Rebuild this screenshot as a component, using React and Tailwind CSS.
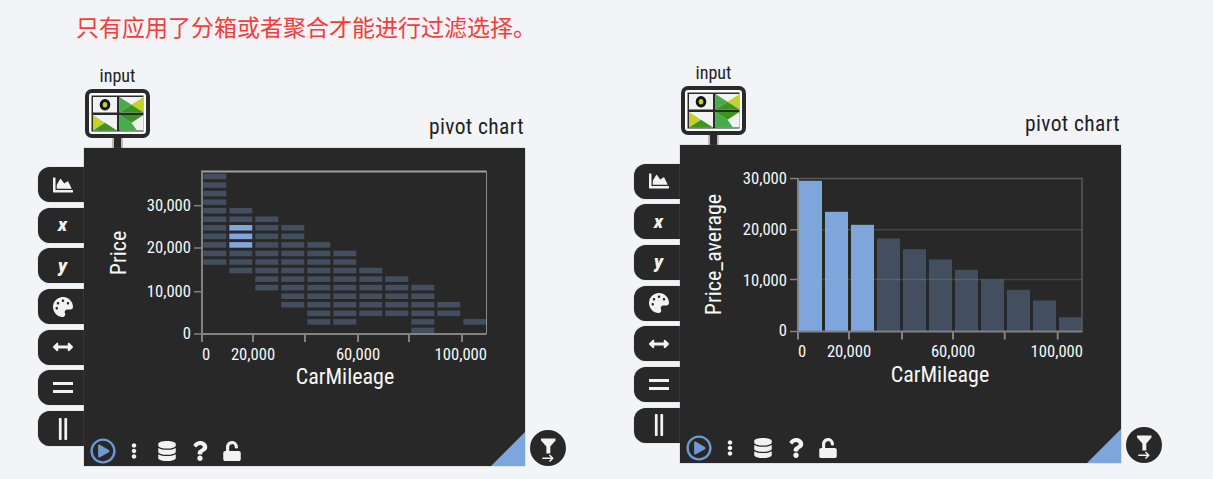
import React from 'react';
import {
  FaChartArea,
  FaPalette,
  FaArrowsAltH,
  FaGripLinesVertical,
  FaRegPlayCircle,
  FaEllipsisV,
  FaDatabase,
  FaQuestion,
  FaUnlock,
} from 'react-icons/fa';

const LIGHT = '#7ea6dc';
const DARK = '#434e5e';

// [first row, last row] of each heatmap column
const HEAT_COLUMNS = [
  [0, 10], [4, 11], [5, 13], [6, 15], [8, 17], [9, 17],
  [11, 16], [12, 16], [13, 18], [15, 16], [17, 17],
];
const BAR_TOPS = [36.3, 67.3, 80.3, 94, 104.7, 115, 125.3, 135, 145.3, 156, 172.7];

const labelClass = "fill-[#f8f8f8] font-['Roboto',sans-serif] font-stretch-condensed";

function TickText({ x, y, anchor = 'middle', children }) {
  return (
    <text x={x} y={y} textAnchor={anchor} className={`${labelClass} text-[16.6px]`}>
      {children}
    </text>
  );
}

function AxisTitle({ x, y, rotate, children }) {
  return (
    <text
      x={x}
      y={y}
      textAnchor="middle"
      transform={rotate ? `rotate(-90 ${x} ${y})` : undefined}
      className={`${labelClass} text-[22px]`}
    >
      {children}
    </text>
  );
}

function HeatmapChart() {
  const ticksX = [118, 169, 221, 274, 325, 378];
  const ticksY = [57.7, 100, 143.7, 186];
  return (
    <svg width="441" height="288" className="block">
      {HEAT_COLUMNS.map(([from, to], col) =>
        Array.from({ length: to - from + 1 }, (_, i) => {
          const row = from + i;
          const hot = col === 1 && row >= 6 && row <= 8;
          return (
            <rect
              key={`${col}-${row}`}
              x={119.3 + 26 * col}
              y={25.7 + 8.55 * row}
              width="23"
              height="5.6"
              fill={hot ? LIGHT : DARK}
            />
          );
        })
      )}
      <path d="M118 23.5H402.5V186" fill="none" stroke="#8c8c8c" strokeWidth="1" />
      <path d="M117 23.5H402.5" fill="none" stroke="#a0a0a0" strokeWidth="2" />
      <path d="M118 23V186H402.5" fill="none" stroke="#828282" strokeWidth="2" />
      {ticksX.map((x) => (
        <path key={x} d={`M${x} 186V194`} stroke="#828282" strokeWidth="2" />
      ))}
      {ticksY.map((y) => (
        <path key={y} d={`M110 ${y}H118`} stroke="#828282" strokeWidth="1.5" />
      ))}
      <TickText x={107} y={63} anchor="end">30,000</TickText>
      <TickText x={107} y={105} anchor="end">20,000</TickText>
      <TickText x={107} y={149} anchor="end">10,000</TickText>
      <TickText x={107} y={191} anchor="end">0</TickText>
      <TickText x={122} y={212}>0</TickText>
      <TickText x={169} y={212}>20,000</TickText>
      <TickText x={274} y={212}>60,000</TickText>
      <TickText x={403} y={212} anchor="end">100,000</TickText>
      <AxisTitle x={42} y={105} rotate>Price</AxisTitle>
      <AxisTitle x={261} y={236}>CarMileage</AxisTitle>
    </svg>
  );
}

function BarChart() {
  const ticksX = [118, 169, 222, 273, 324.7, 377.7];
  const ticksY = [34, 85.3, 135, 187];
  return (
    <svg width="441" height="288" className="block">
      <g transform="translate(0 -0.5)">
        {BAR_TOPS.map((top, i) => (
          <rect
            key={i}
            x={119 + 26 * i}
            y={top}
            width="23"
            height={186.5 - top}
            fill={i < 3 ? LIGHT : DARK}
          />
        ))}
        <path d="M118 34H402V187" fill="none" stroke="#595959" strokeWidth="1.5" />
        <path d="M118 85.3H402M118 135H402" stroke="#a8a8a8" strokeOpacity="0.22" strokeWidth="1.5" />
        <path d="M118 34V187H402.5" fill="none" stroke="#828282" strokeWidth="2" />
        {ticksX.map((x) => (
          <path key={x} d={`M${x} 187V195`} stroke="#828282" strokeWidth="2" />
        ))}
        {ticksY.map((y) => (
          <path key={y} d={`M110 ${y}H118`} stroke="#828282" strokeWidth="1.5" />
        ))}
        <TickText x={107} y={39} anchor="end">30,000</TickText>
        <TickText x={107} y={90} anchor="end">20,000</TickText>
        <TickText x={107} y={141} anchor="end">10,000</TickText>
        <TickText x={107} y={191} anchor="end">0</TickText>
        <TickText x={122} y={212}>0</TickText>
        <TickText x={169} y={212}>20,000</TickText>
        <TickText x={273} y={212}>60,000</TickText>
        <TickText x={403} y={212} anchor="end">100,000</TickText>
        <AxisTitle x={41} y={110} rotate>Price_average</AxisTitle>
        <AxisTitle x={260} y={237}>CarMileage</AxisTitle>
      </g>
    </svg>
  );
}

function InputIcon() {
  return (
    <svg width="65" height="49" viewBox="0 0 65 49" className="block">
      <rect x="2" y="2" width="61" height="45" rx="5" fill="#fff" stroke="#2a2a2a" strokeWidth="4" />
      <rect x="6.5" y="6.5" width="52" height="36" fill="#2a2a2a" />
      {/* zero cell */}
      <rect x="8" y="8" width="24" height="15.5" fill="#f2f2f2" />
      <ellipse cx="20" cy="15.8" rx="3.8" ry="4.2" fill="#c4d32c" stroke="#141414" strokeWidth="3" />
      {/* top right */}
      <rect x="34.5" y="8" width="24" height="15.5" fill="#f2f2f2" />
      <path d="M34.5 8 46.5 15.7 34.5 23.5Z" fill="#47ad4c" />
      <path d="M58.5 8 46.5 15.7 58.5 23.5Z" fill="#c4d32c" />
      <path d="M34.5 23.5 46.5 15.7 58.5 23.5Z" fill="#3a961f" />
      {/* bottom left */}
      <rect x="8" y="26" width="24" height="15.5" fill="#f2f2f2" />
      <path d="M8 26 20 33.7 8 41.5Z" fill="#c4d32c" />
      <path d="M8 41.5 20 33.7 32 41.5Z" fill="#3a961f" />
      {/* bottom right */}
      <rect x="34.5" y="26" width="24" height="15.5" fill="#f2f2f2" />
      <path d="M34.5 26 46.5 33.7 52 41.5H34.5Z" fill="#47ad4c" />
      <path d="M34.5 26 46.5 33.7 58.5 26Z" fill="#3a961f" />
    </svg>
  );
}

function EqualsIcon() {
  return (
    <svg width="20" height="11" viewBox="0 0 20 11" fill="currentColor" className="block">
      <rect width="20" height="3" />
      <rect y="8" width="20" height="3" />
    </svg>
  );
}

function FilterButton() {
  return (
    <div className="ml-[5px] size-9 shrink-0 self-end rounded-full bg-[#282828]">
      <svg width="36" height="36" viewBox="0 0 36 36" className="block">
        <path d="M11 8.5H25.5V10.5L20.3 16.5V23.5H16.4V16.5L11 10.5Z" fill="#f2f2f2" />
        <path d="M12.3 28.3H22.5M19.5 25 22.7 28.3 19.5 31.5" fill="none" stroke="#f2f2f2" strokeWidth="1.5" />
      </svg>
    </div>
  );
}

function SideTab({ children }) {
  return (
    <div className="flex h-[35px] w-[46px] items-center justify-center rounded-l-[12px] bg-[#282828] pl-[3px] text-[#f2f2f2] shadow-[0_0_1px_#888]">
      {children}
    </div>
  );
}

function AxisLetter({ children }) {
  return <span className="font-['Roboto',sans-serif] text-[18px] leading-none font-black italic">{children}</span>;
}

function Widget({ className, children }) {
  return (
    <div className={`w-[527px] shrink-0 ${className}`}>
      <div className="flex h-[82px] w-[486px] items-end justify-between pl-[46px]">
        <div className="flex w-[65px] flex-col items-center">
          <span className="mb-[3px] font-['Roboto',sans-serif] text-[18px] leading-[21px] text-[#222] font-stretch-condensed">input</span>
          <InputIcon />
          <div className="h-[10px] w-[11px] border-x-2 border-[#bbb] bg-[#2a2a2a]" />
        </div>
        <span className="mr-[1px] mb-[9px] font-['Roboto',sans-serif] text-[21.5px] leading-[24px] tracking-[0.4px] text-[#222] font-stretch-condensed">pivot chart</span>
      </div>
      <div className="flex items-start">
        <div className="-ml-px flex w-[46px] shrink-0 flex-col gap-[5.7px] pt-[19px]">
          <SideTab><FaChartArea size={20} /></SideTab>
          <SideTab><AxisLetter>x</AxisLetter></SideTab>
          <SideTab><AxisLetter>y</AxisLetter></SideTab>
          <SideTab><FaPalette size={20} /></SideTab>
          <SideTab><FaArrowsAltH size={20} /></SideTab>
          <SideTab><EqualsIcon /></SideTab>
          <SideTab><FaGripLinesVertical size={22} /></SideTab>
        </div>
        <div className="relative flex h-[318px] w-[441px] shrink-0 flex-col bg-[#282828] shadow-[0_0_1px_#777]">
          {children}
          <div className="flex h-[30px] items-center pl-[6px] text-[#f2f2f2]">
            <FaRegPlayCircle size={26} className="text-[#6d9ad4]" />
            <FaEllipsisV size={16} className="ml-[10px]" />
            <FaDatabase size={20} className="ml-[15px]" />
            <FaQuestion size={20} className="ml-[13px]" />
            <FaUnlock size={20} className="ml-[12px]" />
          </div>
          {/* corner resize handle */}
          <svg width="34" height="34" className="absolute right-0 bottom-0 block">
            <path d="M34 0V34H0Z" fill={LIGHT} />
          </svg>
        </div>
        <FilterButton />
      </div>
    </div>
  );
}

export default function App() {
  return (
    <div className="h-[479px] w-[1213px] overflow-hidden bg-[#f3f4f7]">
      <p className="h-[62.5px] pt-[11px] pl-[76px] font-['Noto_Sans_CJK_SC',sans-serif] text-[23px] leading-[30px] text-[#f83b3b]">
        只有应用了分箱或者聚合才能进行过滤选择。
      </p>
      <div className="flex items-start gap-[69px] pl-[39px]">
        <Widget className="mt-[3.5px]"><HeatmapChart /></Widget>
        <Widget><BarChart /></Widget>
      </div>
    </div>
  );
}
